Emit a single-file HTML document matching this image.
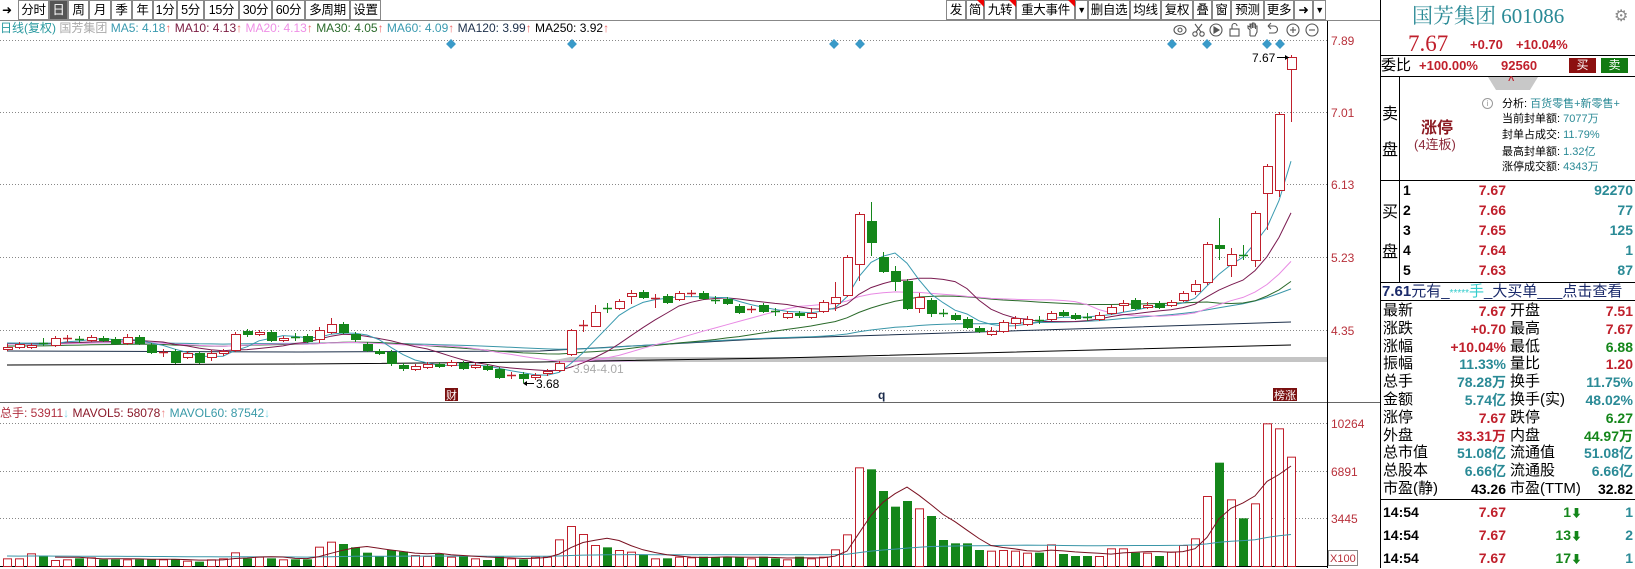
<!DOCTYPE html>
<html><head><meta charset="utf-8"><style>
*{margin:0;padding:0;box-sizing:border-box}
body{width:1635px;height:568px;background:#fff;position:relative;overflow:hidden;font-family:"Liberation Sans","Noto Sans CJK SC",sans-serif;color:#000}
.a{position:absolute;white-space:nowrap}
.tb{position:absolute;top:0;height:20px;border:1px solid #888;font-size:12.5px;line-height:18px;text-align:center;background:#fff;white-space:nowrap;overflow:visible;letter-spacing:-0.3px}
.tri{position:absolute;right:-1px;top:-1px;width:0;height:0;border-top:7px solid #e00;border-left:7px solid transparent}
.r{color:#c0202c}.g{color:#14861a}.t{color:#2a8a96}.k{color:#000}
.row{position:absolute;left:1382px;width:252px;height:18px;font-size:15px;line-height:18px}
.row span{position:absolute;white-space:nowrap}
.b{font-weight:bold}
</style></head><body>
<!-- toolbar -->
<div class="a" style="left:2px;top:2px;font-size:12px;line-height:16px">&#x279C;</div>
<div class="tb" style="left:18px;width:31px">分时</div>
<div class="tb" style="left:49px;width:19px;background:#555;color:#fff">日</div>
<div class="tb" style="left:68px;width:21px">周</div>
<div class="tb" style="left:89px;width:22px">月</div>
<div class="tb" style="left:111px;width:21px">季</div>
<div class="tb" style="left:132px;width:21px">年</div>
<div class="tb" style="left:153px;width:24px">1分</div>
<div class="tb" style="left:177px;width:27px">5分</div>
<div class="tb" style="left:204px;width:35px">15分</div>
<div class="tb" style="left:239px;width:33px">30分</div>
<div class="tb" style="left:272px;width:33px">60分</div>
<div class="tb" style="left:305px;width:45px">多周期</div>
<div class="tb" style="left:350px;width:31px">设置</div>

<div class="tb" style="left:946px;width:20px">发</div>
<div class="tb" style="left:966px;width:18px">简<div class="tri"></div></div>
<div class="tb" style="left:984px;width:32px">九转<div class="tri"></div></div>
<div class="tb" style="left:1016px;width:59px">重大事件<div class="tri"></div></div>
<div class="tb" style="left:1075px;width:13px;font-size:9px">▼</div>
<div class="tb" style="left:1088px;width:42px">删自选</div>
<div class="tb" style="left:1130px;width:31px">均线</div>
<div class="tb" style="left:1161px;width:32px">复权</div>
<div class="tb" style="left:1193px;width:19px">叠</div>
<div class="tb" style="left:1212px;width:19px">窗</div>
<div class="tb" style="left:1231px;width:33px">预测</div>
<div class="tb" style="left:1264px;width:30px">更多</div>
<div class="tb" style="left:1294px;width:19px">&#x279C;</div>
<div class="tb" style="left:1313px;width:13px;font-size:9px">▼</div>
<div class="a" style="left:0;top:20px;width:1380px;height:1px;background:#888"></div>

<!-- MA line -->
<div class="a" style="left:0;top:21px;font-size:12px;line-height:15px">
<span style="color:#2a9aa0">日线(复权)</span> <span style="color:#aaa">国芳集团</span> <span style="color:#3a9ab0">MA5: 4.18</span><span style="color:#e66">↑</span> <span style="color:#7a1a40">MA10: 4.13</span><span style="color:#e66">↑</span> <span style="color:#ef8fe6">MA20: 4.13</span><span style="color:#e66">↑</span> <span style="color:#2a6a2a">MA30: 4.05</span><span style="color:#e66">↑</span> <span style="color:#3a9ab0">MA60: 4.09</span><span style="color:#e66">↑</span> <span style="color:#1c2f4a">MA120: 3.99</span><span style="color:#e66">↑</span> <span style="color:#000">MA250: 3.92</span><span style="color:#e66">↑</span>
</div>

<svg id="ch" class="a" style="left:0;top:0" width="1380" height="568" xmlns="http://www.w3.org/2000/svg"></svg>

<!-- right panel -->
<div class="a" style="left:1380px;top:0;width:1px;height:568px;background:#000"></div>
<div class="a" style="left:1412px;top:3px;font-size:21px;line-height:26px;color:#2a8a96;font-family:'Liberation Serif','Noto Serif CJK SC',serif">国芳集团 601086</div>
<div class="a" style="left:1614px;top:6px;font-size:16px;color:#888">⚙</div>
<div class="a r" style="left:1408px;top:32px;font-size:23px;line-height:24px;font-family:'Liberation Serif',serif">7.67</div>
<div class="a r b" style="left:1470px;top:37px;font-size:13px">+0.70</div>
<div class="a r b" style="left:1516px;top:37px;font-size:13px">+10.04%</div>
<div class="a" style="left:1380px;top:55px;width:255px;height:1px;background:#000"></div>
<div class="a" style="left:1381px;top:56px;font-size:15px;line-height:19px">委比</div>
<div class="a r b" style="left:1419px;top:57px;font-size:13px;line-height:17px">+100.00%</div>
<div class="a r b" style="left:1501px;top:57px;font-size:13px;line-height:17px">92560</div>
<div class="a" style="left:1569px;top:58px;width:27px;height:15px;background:#8c1010;color:#fff;font-size:12px;line-height:15px;text-align:center">买</div>
<div class="a" style="left:1601px;top:58px;width:27px;height:15px;background:#127a12;color:#fff;font-size:12px;line-height:15px;text-align:center">卖</div>
<div class="a" style="left:1380px;top:76px;width:255px;height:1px;background:#000"></div>
<div class="a" style="left:1399px;top:76px;width:1px;height:206px;background:#000"></div>
<div class="a" style="left:1488px;top:77px;height:0;border-top:13px solid #c8c8c8;border-left:8px solid transparent;border-right:8px solid transparent;width:50px"></div>
<div class="a r" style="left:1508px;top:75px;font-size:11px;font-weight:bold">^</div>
<div class="a" style="left:1382px;top:100px;font-size:16px">卖</div>
<div class="a" style="left:1382px;top:136px;font-size:16px">盘</div>
<div class="a b" style="left:1421px;top:114px;font-size:16px;color:#8c1a22">涨停</div>
<div class="a" style="left:1414px;top:134px;font-size:13px;color:#8c2a3a">(4连板)</div>
<div class="a" style="left:1482px;top:98px;width:11px;height:11px;border:1px solid #999;border-radius:50%;font-size:8px;line-height:9px;text-align:center;color:#999">i</div>
<div class="a" style="left:1502px;top:96px;font-size:11px;line-height:16px">分析: <span class="t">百货零售+新零售+</span></div>
<div class="a" style="left:1502px;top:111px;font-size:11px;line-height:16px">当前封单额: <span class="t">7077万</span></div>
<div class="a" style="left:1502px;top:127px;font-size:11px;line-height:16px">封单占成交: <span class="t">11.79%</span></div>
<div class="a" style="left:1502px;top:144px;font-size:11px;line-height:16px">最高封单额: <span class="t">1.32亿</span></div>
<div class="a" style="left:1502px;top:159px;font-size:11px;line-height:16px">涨停成交额: <span class="t">4343万</span></div>
<div class="a" style="left:1380px;top:180px;width:255px;height:1px;background:#000"></div>
<div class="a" style="left:1382px;top:198px;font-size:16px">买</div>
<div class="a" style="left:1382px;top:238px;font-size:16px">盘</div>
<div id="buy"></div>
<div class="a" style="left:1380px;top:282px;width:255px;height:1px;background:#000"></div>
<div class="a" style="left:1382px;top:283px;font-size:15px;line-height:17px;color:#1a2a6a"><b>7.61</b>元有_<span style="color:#3cc;font-size:10px">*****</span><span style="color:#3cc">手</span>_大买单___点击查看</div>
<div class="a" style="left:1380px;top:300px;width:255px;height:1px;background:#000"></div>
<div id="quote"></div>
<div class="a" style="left:1380px;top:499px;width:255px;height:1px;background:#000"></div>
<div id="ticks"></div>

<script>
var D=[[347,349,344,351,1],[344,347,342,349,1],[345,347,343,349,1],[343,344,338,346,0],[338,345,336,347,1],[338,339,335,342,1],[339,340,336,343,0],[337,340,335,342,1],[338,340,336,342,0],[339,343,337,345,0],
[337,343,334,345,1],[337,343,335,345,0],[345,352,343,354,0],[352,353,349,357,1],[351,362,349,364,0],[353,357,351,359,1],[353,362,351,364,0],[353,357,350,361,1],[351,353,349,356,1],[334,350,332,352,1],
[331,334,329,337,0],[332,334,330,336,1],[332,340,330,342,0],[338,340,336,342,1],[337,338,333,341,0],[336,341,334,343,0],[330,339,327,343,1],[324,332,318,334,1],[324,332,322,334,0],[334,339,332,342,0],
[344,350,342,352,0],[351,353,349,355,0],[352,363,350,366,0],[365,368,363,371,0],[366,369,364,371,1],[364,367,362,369,1],[364,366,362,368,0],[362,365,360,367,1],[363,368,361,370,0],[365,367,363,369,1],
[366,369,364,371,0],[369,377,367,379,0],[375,376,372,379,1],[374,378,372,383,0],[375,377,373,380,1],[371,373,369,376,1],[363,370,361,372,1],[330,354,329,356,1],[325,326,320,332,1],[312,326,305,327,1],
[308,309,303,313,0],[301,308,299,310,1],[293,296,290,304,1],[292,297,290,299,0],[298,299,294,308,1],[296,302,294,304,0],[293,299,291,301,1],[293,294,290,297,1],[293,298,291,300,0],[300,301,296,304,0],
[299,303,297,305,0],[306,312,304,314,0],[309,310,306,313,1],[305,311,303,313,0],[311,312,308,316,0],[313,317,311,319,1],[313,315,311,318,0],[313,317,308,319,1],[302,311,300,313,1],[297,303,282,311,1],
[257,295,255,297,1],[214,264,212,281,1],[221,242,202,256,0],[257,271,252,273,0],[271,281,266,291,0],[281,308,279,310,0],[297,308,293,313,1],[300,313,298,317,0],[313,314,309,317,0],[315,319,313,321,0],
[319,327,317,329,0],[328,331,326,333,0],[331,334,327,336,1],[322,331,320,333,1],[318,323,316,329,1],[319,324,316,326,1],[320,321,316,324,0],[313,319,311,321,1],[312,315,310,317,0],[315,318,313,320,0],
[317,318,313,321,0],[315,319,312,321,1],[307,313,305,315,1],[303,305,300,312,1],[300,308,298,310,0],[305,307,302,309,1],[303,307,301,309,0],[302,305,300,307,1],[293,300,291,302,1],[284,291,280,295,1],
[244,282,242,285,1],[245,248,218,260,0],[254,265,248,277,1],[255,256,245,260,0],[213,260,211,267,1],[166,193,164,230,1],[114,190,112,197,1],[57,69,55,122,1]];
var V=[445,445,430,437,450,448,445,442,448,448,448,448,448,448,448,452,455,448,445,427,445,440,445,448,448,448,410,395,402,412,428,438,420,425,435,438,432,440,438,445,450,440,445,448,440,440,388,348,372,405,412,420,425,435,445,445,440,442,440,442,440,442,445,440,445,448,440,445,440,418,373,172,178,243,290,273,295,318,390,400,400,420,422,420,422,428,428,403,432,438,438,438,415,415,428,428,438,425,405,385,258,158,268,325,280,40,55,140];
var R='#c0202c',G='#14861a',s='';
function X(i){return 7+12*i}
[40,112,184,257,330,423,471,518].forEach(function(y){s+='<line x1="0" y1="'+(y+.5)+'" x2="1327" y2="'+(y+.5)+'" stroke="#888" stroke-dasharray="1,2"/>'});
s+='<line x1="0" y1="402.5" x2="1380" y2="402.5" stroke="#666"/>';
s+='<line x1="1327.5" y1="21" x2="1327.5" y2="568" stroke="#000"/>';
s+='<line x1="0" y1="566.5" x2="1327" y2="566.5" stroke="#000"/>';
s+='<polygon points="545,362 570,357 1327,357 1327,362" fill="#c4c4c4"/>';
s+='<polygon points="560,362 600,358 640,362" fill="#d8b8e0"/>';
s+='<polyline fill="none" stroke="#1c2f4a" points="7,351 300,352 540,351 760,339 1291,322"/>';
s+='<polyline fill="none" stroke="#000" points="7,365 300,364 540,362 780,358 1291,345"/>';
var cl=D.map(function(d){return d[4]?d[0]:d[1]});
function ma(a,n,pad){var out=[];for(var i=0;i<a.length;i++){var sum=0;for(var j=i-n+1;j<=i;j++)sum+=(j<0?pad:a[j]);out.push(sum/n)}return out}
function pl(arr,c,from){var p=[];for(var i=from||0;i<arr.length;i++)p.push(X(i)+','+arr[i].toFixed(1));return '<polyline fill="none" stroke="'+c+'" stroke-width="1" points="'+p.join(' ')+'"/>'}
s+=pl(ma(cl,60,343),'#3a96a8');
s+=pl(ma(cl,30,346),'#2a6a2a');
s+=pl(ma(cl,20,344),'#e88ae4');
s+=pl(ma(cl,10,343),'#7a1a50');
s+=pl(ma(cl,5,342),'#3a9ab0');
D.forEach(function(d,i){var x=X(i),c=d[4]?R:G;
s+='<line x1="'+(x+.5)+'" y1="'+d[2]+'" x2="'+(x+.5)+'" y2="'+d[3]+'" stroke="'+c+'"/>';
if(d[1]-d[0]<=1){s+='<line x1="'+(x-4)+'" y1="'+(d[0]+.5)+'" x2="'+(x+5)+'" y2="'+(d[0]+.5)+'" stroke="'+c+'" stroke-width="1.5"/>'}
else if(d[4]){s+='<rect x="'+(x-3.5)+'" y="'+(d[0]+.5)+'" width="9" height="'+(d[1]-d[0])+'" fill="#fff" stroke="'+c+'"/>'}
else{s+='<rect x="'+(x-4)+'" y="'+d[0]+'" width="10" height="'+(d[1]-d[0]+1)+'" fill="'+c+'"/>'}
});
var vy=V.map(function(z){return 410+z/3});
V.forEach(function(z,i){var x=X(i),c=D[i][4]?R:G,t=vy[i];
if(D[i][4])s+='<rect x="'+(x-3.5)+'" y="'+(t+.5)+'" width="8" height="'+(566-t)+'" fill="#fff" stroke="'+c+'"/>';
else s+='<rect x="'+(x-4)+'" y="'+t+'" width="9" height="'+(566-t)+'" fill="'+c+'"/>';
});
s+=pl(ma(vy,60,556),'#3a96a8');
s+=pl(ma(vy,5,557),'#7a1020',4);
[451,572,834,860,1172,1207,1267,1280].forEach(function(x){s+='<rect x="'+(x-3.5)+'" y="40.5" width="7" height="7" fill="#3a9ac8" transform="rotate(45 '+x+' 44)"/>'});
function tx(x,y,t,c,fs,extra){s+='<text x="'+x+'" y="'+y+'" fill="'+c+'" font-size="'+fs+'" font-family="Liberation Sans,Noto Sans CJK SC,sans-serif" '+(extra||'')+'>'+t+'</text>'}
[[40,'7.89'],[112,'7.01'],[184,'6.13'],[257,'5.23'],[330,'4.35'],[423,'10264'],[471,'6891'],[518,'3445']].forEach(function(a){tx(1331,a[0]+5,a[1],'#b8303a',12)});
s+='<rect x="1328.5" y="550.5" width="29" height="15" fill="#fff" stroke="#888"/>';tx(1330,562,'X100','#b8303a',11);
tx(1252,62,'7.67','#000',12);s+='<line x1="1277" y1="57.5" x2="1289" y2="57.5" stroke="#000"/><polygon points="1289,57.5 1285,55 1285,60" fill="#000"/>';
s+='<line x1="525" y1="383.5" x2="534" y2="383.5" stroke="#000"/><polygon points="523,383.5 527,381 527,386" fill="#000"/>';tx(536,388,'3.68','#000',12);
tx(573,373,'3.94-4.01','#aaa',12,'font-family="Liberation Mono,monospace"');
s+='<rect x="445" y="388" width="13" height="13" fill="#7a1010"/>';tx(446,399,'财','#fff',11);
s+='<rect x="1273" y="388" width="24" height="13" fill="#7a1010"/>';tx(1274,399,'榜涨','#fff',11);
tx(878,399,'q','#1a2a4a',12,'font-weight="bold"');
s+='<text x="0" y="417" font-size="12" font-family="Liberation Sans,Noto Sans CJK SC,sans-serif"><tspan fill="#b03040">总手: 53911</tspan><tspan fill="#7fd8e8">↓</tspan><tspan fill="#8b1a2a"> MAVOL5: 58078</tspan><tspan fill="#e88">↑</tspan><tspan fill="#3a9aa8"> MAVOL60: 87542</tspan><tspan fill="#7fd8e8">↓</tspan></text>';
var ic='<g fill="none" stroke="#555" stroke-width="1.1">';
ic+='<ellipse cx="1180" cy="30" rx="6" ry="4.5"/><circle cx="1180" cy="30" r="2"/>';
ic+='<circle cx="1195" cy="34" r="2.2"/><circle cx="1202" cy="34" r="2.2"/><line x1="1196" y1="32" x2="1202" y2="24"/><line x1="1201" y1="32" x2="1195" y2="24"/>';
ic+='<circle cx="1216" cy="30" r="6"/><polygon points="1214,27 1219,30 1214,33" fill="#555"/>';
ic+='<rect x="1230" y="29" width="9" height="7"/><path d="M1232 29v-3a2.5 2.5 0 0 1 5 0"/>';
ic+='<path d="M1250 36v-6l-2-2v-2l2 1v-3h1v5 M1251 28v-4h1.5v4 M1252.5 24v-1h1.5v5 M1254 24h1.5v5 M1255.5 26h1.5v6l-2 4h-5"/>';
ic+='<path d="M1268 26h6a3 3 0 0 1 0 7h-5 M1268 26l3-3 M1268 26l3 3"/>';
ic+='<circle cx="1293" cy="30" r="6"/><line x1="1290" y1="30" x2="1296" y2="30"/><line x1="1293" y1="27" x2="1293" y2="33"/>';
ic+='<circle cx="1312" cy="30" r="6"/><line x1="1309" y1="30" x2="1315" y2="30"/></g>';
s+=ic;
document.getElementById('ch').innerHTML=s;

var b=[['1','7.67','92270'],['2','7.66','77'],['3','7.65','125'],['4','7.64','1'],['5','7.63','87']],h='';
b.forEach(function(r,i){var y=181+i*20;h+='<div class="row b" style="top:'+y+'px;font-size:14px"><span style="left:21px">'+r[0]+'</span><span class="r" style="right:128px">'+r[1]+'</span><span class="t" style="right:1px">'+r[2]+'</span></div>'});
document.getElementById('buy').innerHTML=h;
var q=[['最新','7.67','r','开盘','7.51','r'],['涨跌','+0.70','r','最高','7.67','r'],['涨幅','+10.04%','r','最低','6.88','g'],['振幅','11.33%','t','量比','1.20','r'],['总手','78.28万','t','换手','11.75%','t'],['金额','5.74亿','t','换手(实)','48.02%','t'],['涨停','7.67','r','跌停','6.27','g'],['外盘','33.31万','r','内盘','44.97万','g'],['总市值','51.08亿','t','流通值','51.08亿','t'],['总股本','6.66亿','t','流通股','6.66亿','t'],['市盈(静)','43.26','k','市盈(TTM)','32.82','k']];
h='';q.forEach(function(r,i){var y=302+i*17.8;h+='<div class="row" style="top:'+y+'px"><span style="left:1px">'+r[0]+'</span><span class="b '+r[2]+'" style="right:128px;font-size:14px">'+r[1]+'</span><span style="left:128px">'+r[3]+'</span><span class="b '+r[5]+'" style="right:1px;font-size:14px">'+r[4]+'</span></div>'});
document.getElementById('quote').innerHTML=h;
var t=[['1','1'],['13','2'],['17','1']];h='';
t.forEach(function(r,i){var y=503+i*23;h+='<div class="row b" style="top:'+y+'px;font-size:14px"><span class="k" style="left:1px">14:54</span><span class="r" style="right:128px">7.67</span><span class="g" style="right:52px">'+r[0]+'<span style="position:static;font-size:11px">⬇</span></span><span class="t" style="right:1px">'+r[1]+'</span></div>'});
document.getElementById('ticks').innerHTML=h;
</script>
</body></html>
